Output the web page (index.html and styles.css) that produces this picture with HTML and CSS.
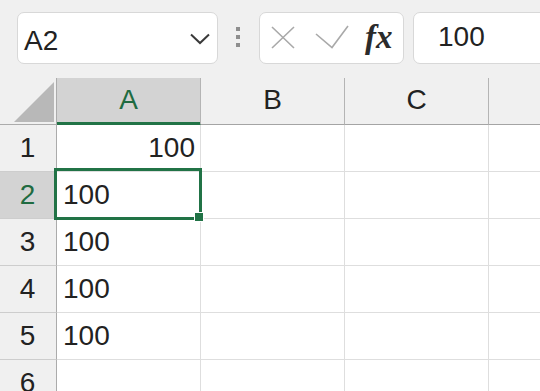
FILE: index.html
```html
<!DOCTYPE html>
<html>
<head>
<meta charset="utf-8">
<link rel="stylesheet" href="styles.css">
</head>
<body>
<div class="toolbar">
  <div class="namebox">
    <span class="name">A2</span>
    <svg class="chev" width="20" height="12" viewBox="0 0 20 12"><polyline points="1,1.5 10,10 19,1.5" fill="none" stroke="#3a3a3a" stroke-width="2"/></svg>
  </div>
  <div class="grip"><i></i><i></i><i></i></div>
  <div class="fbtns">
    <svg class="ico-x" width="24" height="23" viewBox="0 0 24 23"><path d="M1 1 L23 22 M23 1 L1 22" stroke="#a9a9a9" stroke-width="1.6" fill="none"/></svg>
    <svg class="ico-check" width="34" height="24" viewBox="0 0 34 24"><polyline points="1,9 17,22.5 33,1" fill="none" stroke="#a9a9a9" stroke-width="1.6"/></svg>
    <span class="fx">fx</span>
  </div>
  <div class="finput">100</div>
</div>
<div class="sheet">
  <div class="corner"><svg width="40" height="40" viewBox="0 0 40 40"><polygon points="40,0 40,40 0,40" fill="#b8b8b8"/></svg></div>
  <div class="colhead active">A</div>
  <div class="colhead">B</div>
  <div class="colhead">C</div>
  <div class="colhead"></div>

  <div class="rowhead">1</div>
  <div class="cell num">100</div>
  <div class="cell"></div>
  <div class="cell"></div>
  <div class="cell"></div>

  <div class="rowhead active">2</div>
  <div class="cell current">100<div class="sel"><span class="handle"></span></div></div>
  <div class="cell"></div>
  <div class="cell"></div>
  <div class="cell"></div>

  <div class="rowhead">3</div>
  <div class="cell">100</div>
  <div class="cell"></div>
  <div class="cell"></div>
  <div class="cell"></div>

  <div class="rowhead">4</div>
  <div class="cell">100</div>
  <div class="cell"></div>
  <div class="cell"></div>
  <div class="cell"></div>

  <div class="rowhead">5</div>
  <div class="cell">100</div>
  <div class="cell"></div>
  <div class="cell"></div>
  <div class="cell"></div>

  <div class="rowhead">6</div>
  <div class="cell"></div>
  <div class="cell"></div>
  <div class="cell"></div>
  <div class="cell"></div>
</div>
</body>
</html>
```
FILE: styles.css
```css
html, body {
  margin: 0;
  padding: 0;
}
body {
  width: 540px;
  height: 391px;
  overflow: hidden;
  background: #f0f0f0;
  font-family: "Liberation Sans", Arial, sans-serif;
  color: #222;
}

.toolbar {
  display: flex;
  align-items: flex-start;
  padding: 12px 0 0 17px;
  height: 52px;
}

.namebox {
  box-sizing: border-box;
  width: 201px;
  height: 52px;
  flex: none;
  background: #fff;
  border: 1px solid #d8d8d8;
  border-radius: 7px;
  display: flex;
  align-items: center;
  padding: 0 7px 0 6px;
}
.name {
  flex: 1;
  font-size: 28px;
  line-height: 44px;
  padding-top: 6px;
}
.chev {
  display: block;
  margin-top: 1px;
}

.grip {
  flex: none;
  margin-left: 18px;
  padding-top: 15px;
  display: flex;
  flex-direction: column;
  gap: 4px;
}
.grip i {
  display: block;
  width: 4px;
  height: 4px;
  background: #8e8e8e;
}

.fbtns {
  box-sizing: border-box;
  flex: none;
  margin-left: 19px;
  width: 145px;
  height: 52px;
  background: #fff;
  border: 1px solid #d8d8d8;
  border-radius: 7px;
  display: flex;
  align-items: center;
  padding-left: 11px;
}
.ico-x {
  display: block;
  margin-top: -1px;
}
.ico-check {
  display: block;
  margin-left: 20px;
  margin-top: -3px;
}
.fx {
  margin-left: 16px;
  font-family: "Liberation Serif", "Times New Roman", serif;
  font-style: italic;
  font-weight: bold;
  font-size: 33px;
  line-height: 40px;
  color: #2b2b2b;
  margin-top: -2px;
}

.finput {
  box-sizing: border-box;
  flex: none;
  margin-left: 9px;
  width: 200px;
  height: 52px;
  background: #fff;
  border: 1px solid #d8d8d8;
  border-radius: 7px;
  padding-left: 24px;
  font-size: 28px;
  line-height: 47px;
}

.sheet {
  margin-top: 14px;
  display: grid;
  grid-template-columns: 57px repeat(4, 144px);
  grid-auto-rows: 47px;
  width: max-content;
  font-size: 28px;
}

.corner {
  box-sizing: border-box;
  border-right: 1px solid #ababab;
  border-bottom: 1px solid #ababab;
  display: flex;
  justify-content: flex-end;
  align-items: flex-end;
  padding: 0 2px 2px 0;
}
.corner svg {
  display: block;
}

.colhead {
  box-sizing: border-box;
  border-right: 1px solid #b4b4b4;
  border-bottom: 1px solid #a4a4a4;
  text-align: center;
  line-height: 43px;
  color: #222;
}
.colhead.active {
  background: #d3d3d3;
  color: #1f6b41;
  border-bottom-color: #217346;
  box-shadow: inset 0 -2px 0 #217346;
}

.rowhead {
  box-sizing: border-box;
  border-right: 1px solid #ababab;
  border-bottom: 1px solid #cdcdcd;
  text-align: center;
  line-height: 46px;
  padding-right: 1px;
}
.rowhead.active {
  background: #d3d3d3;
  color: #1f6b41;
}

.cell {
  box-sizing: border-box;
  background: #fff;
  border-right: 1px solid #dedede;
  border-bottom: 1px solid #dedede;
  line-height: 46px;
  padding: 0 5px 0 6px;
  white-space: nowrap;
}
.cell.num {
  text-align: right;
}
.cell.current {
  position: relative;
}
.sel {
  position: absolute;
  left: -3px;
  top: -4px;
  right: -2px;
  bottom: -2px;
  border: 3px solid #217346;
}
.handle {
  position: absolute;
  right: -4px;
  bottom: -4px;
  width: 8px;
  height: 8px;
  background: #217346;
  box-shadow: 0 0 0 1px #fff;
}
```
